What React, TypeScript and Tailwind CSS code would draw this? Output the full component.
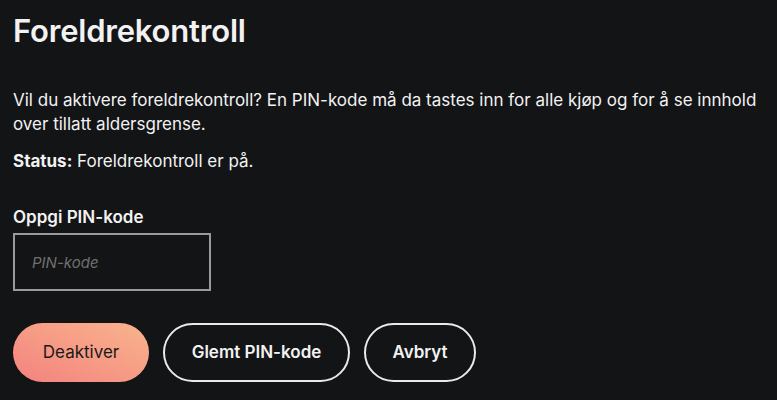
export default function App() {
  return (
    <div className="min-h-[400px] w-full bg-[#131416] text-[#f2f2f2] px-[13px] pt-[13px]" style={{ fontFamily: "Inter, 'Noto Sans', sans-serif" }}>
      <h1 className="text-[31px] leading-[36px] font-semibold tracking-[-0.2px]">Foreldrekontroll</h1>
      <p className="mt-[39px] text-[17px] leading-[24px]">
        Vil du aktivere foreldrekontroll? En PIN-kode må da tastes inn for alle kjøp og for å se innhold over tillatt aldersgrense.
      </p>
      <p className="mt-[13px] text-[17px] leading-[24px]">
        <span className="font-bold">Status:</span> Foreldrekontroll er på.
      </p>
      <label className="block mt-[32px] text-[17px] leading-[24px] font-semibold">Oppgi PIN-kode</label>
      <input
        type="text"
        placeholder="PIN-kode"
        className="mt-[4px] block w-[198px] h-[58px] border-2 border-[#9a9a9a] bg-transparent px-[17px] text-[15px] italic placeholder:text-[#707070] outline-none"
      />
      <div className="mt-[32px] flex gap-[14px]">
        <button className="h-[59px] w-[136px] rounded-full bg-gradient-to-tr from-[#f3827f] to-[#f8b48c] text-[#1a1a1a] text-[17px]">Deaktiver</button>
        <button className="h-[59px] w-[187px] rounded-full border-2 border-[#eaeaea] text-[17px] font-semibold">Glemt PIN-kode</button>
        <button className="h-[59px] w-[112px] rounded-full border-2 border-[#eaeaea] text-[17px] font-semibold">Avbryt</button>
      </div>
    </div>
  );
}
